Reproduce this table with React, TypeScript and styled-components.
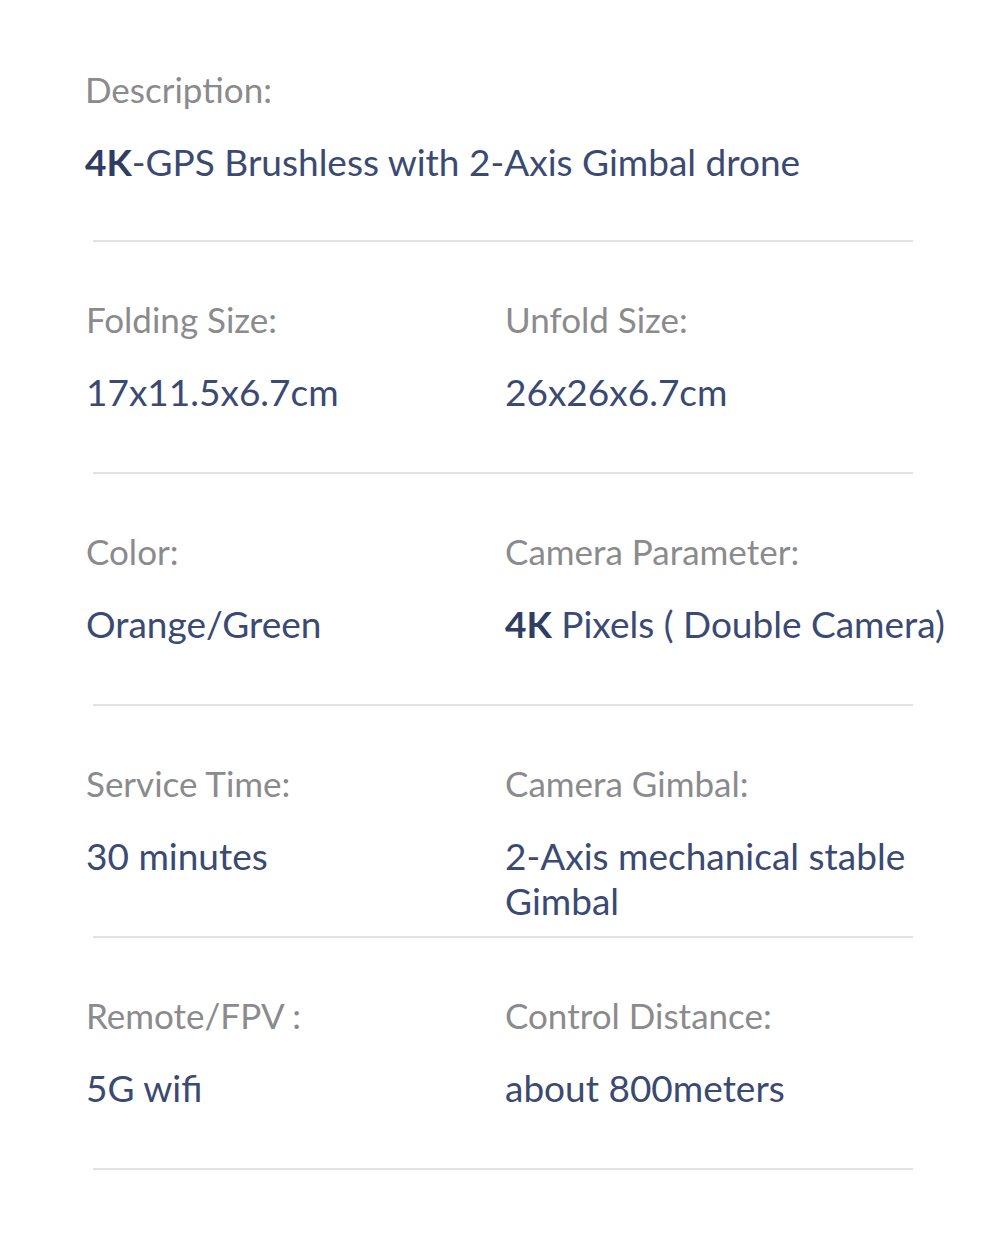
import React from 'react';
import styled, { createGlobalStyle } from 'styled-components';

interface SpecItem {
    label: string;
    value: string;
    strong?: string;
}

const specRows: SpecItem[][] = [
    [
        { label: 'Folding Size:', value: '17x11.5x6.7cm' },
        { label: 'Unfold Size:', value: '26x26x6.7cm' },
    ],
    [
        { label: 'Color:', value: 'Orange/Green' },
        { label: 'Camera Parameter:', strong: '4K', value: 'Pixels ( Double Camera)' },
    ],
    [
        { label: 'Service Time:', value: '30 minutes' },
        { label: 'Camera Gimbal:', value: '2-Axis mechanical stable Gimbal' },
    ],
    [
        { label: 'Remote/FPV :', value: '5G wifi' },
        { label: 'Control Distance:', value: 'about 800meters' },
    ],
];

const GlobalStyle = createGlobalStyle`
    html, body {
        margin: 0;
        padding: 0;
        background: #ffffff;
    }
    body {
        font-family: Lato, 'Open Sans', sans-serif;
    }
`;

const App = () => {
    return (
        <Page>
            <GlobalStyle />
            <DescSection>
                <Label>Description:</Label>
                <Value>
                    <Strong>4K</Strong>-GPS Brushless with 2-Axis Gimbal drone
                </Value>
            </DescSection>
            <Divider />
            {specRows.map((row, i) => (
                <React.Fragment key={i}>
                    <Row>
                        {row.map((item) => (
                            <Cell key={item.label}>
                                <Label>{item.label}</Label>
                                <Value>
                                    {item.strong && <Strong>{item.strong}</Strong>}
                                    {item.strong ? ' ' : ''}
                                    {item.value}
                                </Value>
                            </Cell>
                        ))}
                    </Row>
                    <Divider />
                </React.Fragment>
            ))}
        </Page>
    );
};

export default App;

const Page = styled.div`
    width: 1000px;
    height: 1243px;
    background: #ffffff;
    overflow: hidden;
`;

const Cell = styled.div`
    display: flex;
    flex-direction: column;
    gap: 27px;
`;

const DescSection = styled(Cell)`
    height: 240px;
    padding: 67px 0 0 85px;
    box-sizing: border-box;
`;

const Row = styled.div`
    display: grid;
    grid-template-columns: 419px 1fr;
    height: 230px;
    padding: 55px 40px 0 86px;
    box-sizing: border-box;
`;

const Label = styled.div`
    font-size: 35px;
    line-height: 45px;
    color: #8b8b8d;
`;

const Value = styled.div`
    font-size: 37px;
    line-height: 45px;
    color: #3b4a72;
`;

const Strong = styled.span`
    font-weight: 700;
    color: #2f3d62;
`;

const Divider = styled.div`
    height: 2px;
    margin: 0 87px 0 93px;
    background: #e3e3e5;
`;
